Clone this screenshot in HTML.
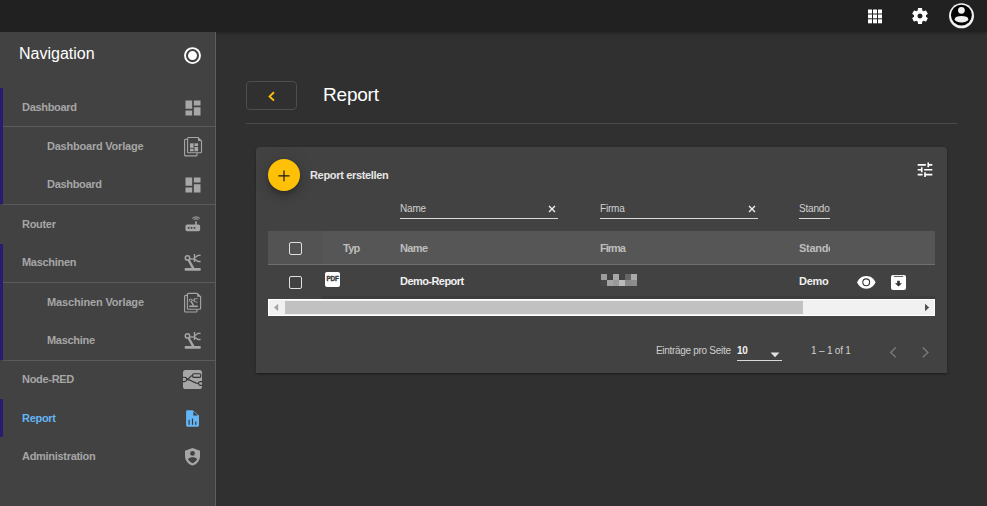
<!DOCTYPE html>
<html><head><meta charset="utf-8">
<style>
*{margin:0;padding:0;box-sizing:border-box}
html,body{width:987px;height:506px;overflow:hidden;background:#303030;font-family:"Liberation Sans",sans-serif}
.a{position:absolute}
.t{position:absolute;white-space:nowrap;line-height:1}
#top{left:0;top:0;width:987px;height:32px;background:#212121;box-shadow:0 1px 3px rgba(0,0,0,.35)}
#side{left:0;top:32px;width:216px;height:474px;background:#424242;border-right:1px solid #5e5e5e}
.nav{font-size:11px;font-weight:700;color:#a6a6a6;letter-spacing:-0.3px}
.bar{left:0;width:3px;background:#2a1a70}
.dv{left:3px;width:212px;height:1px;background:#5a5a5a}
.ic{position:absolute;fill:#a6a6a6}
</style></head><body>
<div id="top" class="a"></div>

<!-- top icons -->
<svg class="a" style="left:867px;top:9px" width="16" height="15" viewBox="0 0 16 15">
 <g fill="#fff">
 <rect x="1" y="0.5" width="4" height="4"/><rect x="6" y="0.5" width="4" height="4"/><rect x="11" y="0.5" width="4" height="4"/>
 <rect x="1" y="5.5" width="4" height="3.8"/><rect x="6" y="5.5" width="4" height="3.8"/><rect x="11" y="5.5" width="4" height="3.8"/>
 <rect x="1" y="10.3" width="4" height="4"/><rect x="6" y="10.3" width="4" height="4"/><rect x="11" y="10.3" width="4" height="4"/>
 </g></svg>
<svg class="a" style="left:909.7px;top:6.4px" width="20" height="20" viewBox="0 0 24 24"><path fill="#fff" d="M19.14,12.94c0.04-0.3,0.06-0.61,0.06-0.94c0-0.32-0.02-0.64-0.07-0.94l2.03-1.58c0.18-0.14,0.23-0.41,0.12-0.61 l-1.92-3.32c-0.12-0.22-0.37-0.29-0.59-0.22l-2.39,0.96c-0.5-0.38-1.03-0.7-1.62-0.94L14.4,2.81c-0.04-0.24-0.24-0.41-0.48-0.41 h-3.84c-0.24,0-0.43,0.17-0.47,0.41L9.25,5.35C8.66,5.59,8.12,5.92,7.63,6.29L5.24,5.33c-0.22-0.08-0.47,0-0.59,0.22L2.74,8.87 C2.62,9.08,2.66,9.34,2.86,9.48l2.03,1.58C4.84,11.36,4.8,11.69,4.8,12s0.02,0.64,0.07,0.94l-2.03,1.58 c-0.18,0.14-0.23,0.41-0.12,0.61l1.92,3.32c0.12,0.22,0.37,0.29,0.59,0.22l2.39-0.96c0.5,0.38,1.03,0.7,1.62,0.94l0.36,2.54 c0.05,0.24,0.24,0.41,0.48,0.41h3.84c0.24,0,0.44-0.17,0.47-0.41l0.36-2.54c0.59-0.24,1.130-0.56,1.62-0.94l2.39,0.96 c0.22,0.08,0.47,0,0.59-0.22l1.92-3.32c0.12-0.22,0.07-0.47-0.12-0.61L19.14,12.94z M12,15c-1.66,0-3-1.34-3-3 s1.34-3,3-3s3,1.34,3,3S13.66,15,12,15z"/></svg>
<svg class="a" style="left:948px;top:3px" width="27" height="27" viewBox="0 0 27 27">
 <circle cx="13.5" cy="12.8" r="12.5" fill="#f0f0f0"/>
 <ellipse cx="13.4" cy="12.1" rx="10.5" ry="10.3" fill="#000"/>
 <circle cx="13.4" cy="7.3" r="3.4" fill="#eee"/>
 <ellipse cx="13.5" cy="16.2" rx="6.8" ry="3.3" fill="#eee"/>
</svg>

<div id="side" class="a"></div>
<div class="t" style="left:19px;top:46px;font-size:16px;color:#fff">Navigation</div>
<svg class="a" style="left:182px;top:45px" width="21" height="21" viewBox="0 0 21 21">
 <circle cx="10.5" cy="10.6" r="7.5" fill="none" stroke="#fff" stroke-width="1.9"/>
 <circle cx="10.5" cy="10.6" r="4.5" fill="#fff"/>
</svg>

<div class="a bar" style="top:88px;height:116px"></div>
<div class="a bar" style="top:244px;height:116px"></div>
<div class="a bar" style="top:399px;height:38px"></div>
<div class="a dv" style="top:126px"></div>
<div class="a dv" style="top:204px"></div>
<div class="a dv" style="top:282px"></div>
<div class="a dv" style="top:360px"></div>

<div class="t nav" style="left:22px;top:102px">Dashboard</div>
<div class="t nav" style="left:47px;top:141px;letter-spacing:-0.22px">Dashboard Vorlage</div>
<div class="t nav" style="left:47px;top:179px">Dashboard</div>
<div class="t nav" style="left:22px;top:219px">Router</div>
<div class="t nav" style="left:22px;top:257px">Maschinen</div>
<div class="t nav" style="left:47px;top:297px;letter-spacing:-0.15px">Maschinen Vorlage</div>
<div class="t nav" style="left:47px;top:335px">Maschine</div>
<div class="t nav" style="left:22px;top:374px">Node-RED</div>
<div class="t nav" style="left:22px;top:413px;color:#64b5f6">Report</div>
<div class="t nav" style="left:22px;top:451px">Administration</div>

<!-- sidebar icons -->
<svg class="ic" style="left:183px;top:98px" width="20" height="20" viewBox="0 0 24 24"><path d="M3 13h8V3H3v10zm0 8h8v-6H3v6zm10 0h8V11h-8v10zm0-18v6h8V3h-8z"/></svg>
<svg class="ic" style="left:183px;top:175px" width="20" height="20" viewBox="0 0 24 24"><path d="M3 13h8V3H3v10zm0 8h8v-6H3v6zm10 0h8V11h-8v10zm0-18v6h8V3h-8z"/></svg>

<!-- dashboard vorlage -->
<svg class="a" style="left:183px;top:136px" width="20" height="22" viewBox="0 0 20 22">
 <g fill="none" stroke="#a6a6a6" stroke-width="1.1">
  <path d="M4.5 3.2 H2.6 a1 1 0 0 0 -1 1 V18.9 a1 1 0 0 0 1 1 H13 a1 1 0 0 0 1 -1 V17"/>
  <path d="M5.6 1.5 H15 L18.5 5 V15.8 a1 1 0 0 1 -1 1 H5.6 a1 1 0 0 1 -1 -1 V2.5 a1 1 0 0 1 1 -1z"/>
 </g>
 <path d="M15 1.5 V5 H18.5z" fill="#a6a6a6"/>
 <g fill="#a6a6a6"><rect x="7" y="7.3" width="3.6" height="4.6"/><rect x="11.5" y="7.3" width="3.6" height="2.8"/><rect x="7" y="12.7" width="3.6" height="2.6"/><rect x="11.5" y="11" width="3.6" height="4.3"/></g>
</svg>

<!-- router -->
<svg class="ic" style="left:182.7px;top:214.4px" width="19.6" height="19.6" viewBox="0 0 24 24"><path d="M20.2 5.9l.8-.8C19.6 3.7 17.8 3 16 3s-3.6.7-5 2.1l.8.8C13 4.8 14.5 4.2 16 4.2s3 .6 4.2 1.7zm-.9.8c-.9-.9-2.1-1.4-3.3-1.4s-2.4.5-3.3 1.4l.8.8c.7-.7 1.6-1 2.5-1 .9 0 1.8.3 2.5 1l.8-.8zM19 13h-2V9h-2v4H5c-1.1 0-2 .9-2 2v4c0 1.1.9 2 2 2h14c1.1 0 2-.9 2-2v-4c0-1.1-.9-2-2-2zM8 18H6v-2h2v2zm3.5 0h-2v-2h2v2zm3.5 0h-2v-2h2v2z"/></svg>

<!-- maschinen (robot arm) -->
<svg class="a" style="left:182px;top:252px" width="20" height="20" viewBox="0 0 20 20">
 <g fill="none" stroke="#a6a6a6">
  <circle cx="5.5" cy="5.9" r="2.2" stroke-width="1.5"/>
  <path d="M6.6 8 L11.3 16.3" stroke-width="2.4"/>
  <path d="M7.6 7 H12.3" stroke-width="1.3"/>
  <path d="M12.5 2 V9.9" stroke-width="1.4"/>
  <path d="M18.6 3.4 H16 L13 5.6" stroke-width="1.3"/>
  <path d="M18.6 9.5 H16 L13 7.4" stroke-width="1.3"/>
 </g>
 <rect x="2.6" y="16" width="16.2" height="2.8" rx="1" fill="#a6a6a6"/>
</svg>

<!-- maschinen vorlage -->
<svg class="a" style="left:183px;top:292px" width="20" height="22" viewBox="0 0 20 22">
 <g fill="none" stroke="#a6a6a6" stroke-width="1.1">
  <path d="M4.5 3.4 H2.6 a1 1 0 0 0 -1 1 V19 a1 1 0 0 0 1 1 H13 a1 1 0 0 0 1 -1 V17.2"/>
  <path d="M5.4 1.4 H14.2 L17.6 4.8 V16.2 a1 1 0 0 1 -1 1 H5.4 a1 1 0 0 1 -1 -1 V2.4 a1 1 0 0 1 1 -1z"/>
 </g>
 <path d="M14.2 1.4 V4.8 H17.6z" fill="#a6a6a6"/>
 <g fill="none" stroke="#a6a6a6">
  <circle cx="7.6" cy="8.3" r="1.3" stroke-width="1"/>
  <path d="M8.2 9.6 L10.6 13.6" stroke-width="1.5"/>
  <path d="M8.8 8.2 H11.2" stroke-width="0.9"/>
  <path d="M11.3 6 V10" stroke-width="0.9"/>
  <path d="M14.6 6.6 H13 L11.6 7.6 M14.6 10.2 H13 L11.6 9.2" stroke-width="0.9"/>
 </g>
 <rect x="6.2" y="13.5" width="8.6" height="1.6" fill="#a6a6a6"/>
</svg>

<!-- maschine -->
<svg class="a" style="left:182px;top:330px" width="20" height="20" viewBox="0 0 20 20">
 <g fill="none" stroke="#a6a6a6">
  <circle cx="5.5" cy="5.9" r="2.2" stroke-width="1.5"/>
  <path d="M6.6 8 L11.3 16.3" stroke-width="2.4"/>
  <path d="M7.6 7 H12.3" stroke-width="1.3"/>
  <path d="M12.5 2 V9.9" stroke-width="1.4"/>
  <path d="M18.6 3.4 H16 L13 5.6" stroke-width="1.3"/>
  <path d="M18.6 9.5 H16 L13 7.4" stroke-width="1.3"/>
 </g>
 <rect x="2.6" y="16" width="16.2" height="2.8" rx="1" fill="#a6a6a6"/>
</svg>

<!-- node red -->
<svg class="a" style="left:183px;top:370px" width="19" height="19" viewBox="0 0 19 19">
 <rect x="0" y="0" width="19" height="19" rx="2.6" fill="#a6a6a6"/>
 <g fill="none" stroke="#333" stroke-width="1.15">
  <rect x="9.6" y="3.7" width="8.2" height="3.6" rx="1.3"/>
  <path d="M-1 7.2 H1.6 a2.2 2.2 0 0 1 0 4.4 H-1"/>
  <path d="M20 11.6 H17.4 a1.9 1.9 0 0 0 0 3.8 H20"/>
  <path d="M3.8 9.4 C6.2 9.4 7 5.5 9.6 5.5"/>
  <path d="M3.8 9.4 C8 9.4 10.5 13.5 15.5 13.5"/>
 </g>
</svg>

<!-- report (blue) -->
<svg class="a" style="left:186px;top:410px" width="14" height="17" viewBox="0 0 14 17">
 <path d="M1.2 0.3 H6.6 L13 5.4 V15.6 a1.1 1.1 0 0 1 -1.1 1.1 H1.2 a1.1 1.1 0 0 1 -1.1 -1.1 V1.4 a1.1 1.1 0 0 1 1.1 -1.1z" fill="#64b5f6"/>
 <path d="M7.4 1.6 V5.5 H11.8z" fill="#3a3a3a"/>
 <g fill="#3a3a3a"><rect x="2.5" y="9.8" width="1.2" height="5"/><rect x="5.9" y="8.6" width="1.2" height="6.2"/><rect x="9.2" y="11.5" width="1.2" height="3.3"/></g>
</svg>

<!-- administration shield -->
<svg class="a" style="left:185px;top:448px" width="15" height="18" viewBox="0 0 15 18">
 <path d="M7.5 0 L15 2.8 V8.3 C15 12.6 11.8 16.5 7.5 17.4 C3.2 16.5 0 12.6 0 8.3 V2.8z" fill="#a6a6a6"/>
 <circle cx="7.5" cy="5.4" r="2.4" fill="#424242"/>
 <path d="M3 11.1 C4.1 9.8 5.8 9.2 7.6 9.2 C9.4 9.2 11.1 9.8 12.2 11.1 C11.2 13.1 9.6 14.6 7.6 15.3 C5.6 14.6 4 13.1 3 11.1z" fill="#424242"/>
</svg>

<!-- main header -->
<div class="a" style="left:246px;top:81px;width:51px;height:29px;border:1px solid #4d4d4d;border-radius:4px"></div>
<svg class="a" style="left:266px;top:90px" width="11" height="13" viewBox="0 0 11 13"><path d="M8 2.2 L3.6 6.4 L8 10.6" fill="none" stroke="#ffc107" stroke-width="1.9"/></svg>
<div class="t" style="left:323px;top:85px;font-size:19px;color:#fff;letter-spacing:-0.2px">Report</div>
<div class="a" style="left:246px;top:123px;width:711px;height:1px;background:#4a4a4a"></div>

<!-- card -->
<div class="a" style="left:256px;top:147px;width:691px;height:226px;background:#424242;border-radius:4px 4px 0 0;box-shadow:0 2px 2px -1px rgba(0,0,0,.3),0 1px 3px rgba(0,0,0,.2)"></div>

<!-- card content -->
<div class="a" style="left:268px;top:159px;width:32px;height:32px;border-radius:50%;background:#ffc107;box-shadow:0 3px 5px -1px rgba(0,0,0,.2),0 6px 10px 0 rgba(0,0,0,.14),0 1px 18px 0 rgba(0,0,0,.12)"></div>
<svg class="a" style="left:278.4px;top:169.8px" width="12" height="12" viewBox="0 0 12 12"><path d="M6 0.4 V11.2 M0.4 5.8 H11.6" stroke="#1a1a1a" stroke-width="1.2"/></svg>
<div class="t" style="left:310px;top:170px;font-size:11px;font-weight:700;color:#e6e6e6;letter-spacing:-0.33px">Report erstellen</div>

<!-- tune icon -->
<svg class="a" style="left:914.7px;top:160px" width="20" height="19.5" viewBox="0 0 24 24"><path fill="#fff" d="M3 17v2h6v-2H3zM3 5v2h10V5H3zm10 16v-2h8v-2h-8v-2h-2v6h2zM7 9v2H3v2h4v2h2V9H7zm14 4v-2H11v2h10zm-6-4h2V7h4V5h-4V3h-2v6z"/></svg>

<!-- filters -->
<div class="t" style="left:400px;top:204px;font-size:10px;color:#d0d0d0;letter-spacing:-0.2px">Name</div>
<div class="a" style="left:400px;top:218px;width:158px;height:1px;background:#d8d8d8"></div>
<svg class="a" style="left:548px;top:205px" width="8" height="8" viewBox="0 0 8 8"><path d="M1 1 L7 7 M7 1 L1 7" stroke="#f0f0f0" stroke-width="1.4"/></svg>
<div class="t" style="left:600px;top:204px;font-size:10px;color:#d0d0d0;letter-spacing:-0.2px">Firma</div>
<div class="a" style="left:600px;top:218px;width:158px;height:1px;background:#d8d8d8"></div>
<svg class="a" style="left:748px;top:205px" width="8" height="8" viewBox="0 0 8 8"><path d="M1 1 L7 7 M7 1 L1 7" stroke="#f0f0f0" stroke-width="1.4"/></svg>
<div class="a" style="left:799px;top:200px;width:31px;height:16px;overflow:hidden"><div class="t" style="left:0;top:4px;font-size:10px;color:#d0d0d0;letter-spacing:-0.2px">Standort</div></div>
<div class="a" style="left:799px;top:218px;width:31px;height:1px;background:#d8d8d8"></div>

<!-- table header -->
<div class="a" style="left:268px;top:231px;width:667px;height:34px;background:#565656;border-bottom:1px solid #6e6e6e"></div>
<div class="a" style="left:268px;top:231px;width:54px;height:33px;background:#535353"></div>
<div class="a" style="left:289px;top:242px;width:13px;height:13px;border:1.5px solid #e0e0e0;border-radius:2px"></div>
<div class="t" style="left:343px;top:243px;font-size:11px;font-weight:700;color:#bdbdbd;letter-spacing:-0.75px">Typ</div>
<div class="t" style="left:400px;top:243px;font-size:11px;font-weight:700;color:#bdbdbd;letter-spacing:-0.65px">Name</div>
<div class="t" style="left:600px;top:243px;font-size:11px;font-weight:700;color:#bdbdbd;letter-spacing:-1px">Firma</div>
<div class="a" style="left:799px;top:238px;width:31px;height:18px;overflow:hidden"><div class="t" style="left:0;top:5px;font-size:11px;font-weight:700;color:#bdbdbd;letter-spacing:-0.3px">Standort</div></div>

<!-- row -->
<div class="a" style="left:289px;top:276px;width:13px;height:13px;border:1.5px solid #e0e0e0;border-radius:2px"></div>
<div class="a" style="left:325px;top:272px;width:15px;height:14.5px;background:#fff;border-radius:2px"></div>
<div class="t" style="left:326.5px;top:276px;font-size:6.5px;font-weight:700;color:#3a3a3a;letter-spacing:-0.3px;-webkit-text-stroke:0.35px #3a3a3a">PDF</div>
<div class="t" style="left:400px;top:276px;font-size:11px;font-weight:700;color:#f0f0f0;letter-spacing:-0.55px">Demo-Report</div>
<svg class="a" style="left:601px;top:274px" width="36" height="12" viewBox="0 0 36 12" shape-rendering="crispEdges">
 <rect x="0" y="0" width="6" height="6" fill="#9c9c9c"/><rect x="12" y="0" width="6" height="6" fill="#a6a6a6"/><rect x="24" y="0" width="6" height="6" fill="#666"/><rect x="30" y="0" width="6" height="6" fill="#aaa"/>
 <rect x="0" y="6" width="6" height="6" fill="#474747"/><rect x="6" y="6" width="6" height="6" fill="#a2a2a2"/><rect x="12" y="6" width="6" height="6" fill="#999"/><rect x="18" y="6" width="6" height="6" fill="#bbb"/><rect x="24" y="6" width="6" height="6" fill="#8a8a8a"/><rect x="30" y="6" width="6" height="6" fill="#8c8c8c"/>
</svg>
<div class="t" style="left:799px;top:276px;font-size:11px;font-weight:700;color:#f0f0f0;letter-spacing:-0.3px">Demo</div>
<svg class="a" style="left:856px;top:272px" width="20" height="20" viewBox="0 0 20 20">
 <path d="M10.3 3.9 C5.6 3.9 2.4 6.8 1.2 10.3 C2.4 13.8 5.6 16.7 10.3 16.7 C15 16.7 18.2 13.8 19.4 10.3 C18.2 6.8 15 3.9 10.3 3.9z" fill="#fff"/>
 <circle cx="10.2" cy="10.3" r="3.4" fill="#fff" stroke="#333" stroke-width="1.1"/>
</svg>
<svg class="a" style="left:891px;top:275px" width="15" height="15" viewBox="0 0 15 15">
 <rect x="0" y="0" width="15" height="15" rx="2" fill="#fff"/>
 <rect x="2.8" y="0.9" width="9.4" height="1" fill="#555"/>
 <path d="M6.2 5.8 H8.8 V8.2 H11 L7.5 11.6 L4 8.2 H6.2z" fill="#333"/>
</svg>

<!-- scrollbar -->
<div class="a" style="left:322px;top:296px;width:613px;height:3px;background:#3c3c3c"></div>
<div class="a" style="left:268px;top:299px;width:667px;height:17px;background:#fff"></div>
<div class="a" style="left:269px;top:300px;width:665px;height:15px;background:#f1f1f1"></div>
<div class="a" style="left:285px;top:301px;width:518px;height:13px;background:#c1c1c1"></div>
<svg class="a" style="left:273px;top:303px" width="6" height="9" viewBox="0 0 6 9"><path d="M5.2 0.8 V8.2 L1 4.5z" fill="#a3a3a3"/></svg>
<svg class="a" style="left:924px;top:303px" width="6" height="9" viewBox="0 0 6 9"><path d="M1 0.8 V8.2 L5.2 4.5z" fill="#505050"/></svg>

<!-- paginator -->
<div class="t" style="left:656px;top:346px;font-size:10px;color:#cfcfcf;letter-spacing:-0.3px">Einträge pro Seite</div>
<div class="t" style="left:737px;top:346px;font-size:10px;font-weight:700;color:#f0f0f0;letter-spacing:-0.2px">10</div>
<div class="a" style="left:737px;top:360px;width:45px;height:1px;background:#d8d8d8"></div>
<svg class="a" style="left:770px;top:352px" width="10" height="6" viewBox="0 0 10 6"><path d="M0.5 0.5 H9.5 L5 5.3z" fill="#e0e0e0"/></svg>
<div class="t" style="left:811px;top:346px;font-size:10px;color:#cfcfcf;letter-spacing:-0.2px">1 – 1 of 1</div>
<svg class="a" style="left:886px;top:344px" width="14" height="16" viewBox="0 0 14 16"><path d="M9.8 3.6 L4.7 8.4 L9.8 13.2" fill="none" stroke="#7a7a7a" stroke-width="1.4"/></svg>
<svg class="a" style="left:918px;top:344px" width="14" height="16" viewBox="0 0 14 16"><path d="M4.8 3.6 L9.9 8.4 L4.8 13.2" fill="none" stroke="#7a7a7a" stroke-width="1.4"/></svg>

</body></html>
